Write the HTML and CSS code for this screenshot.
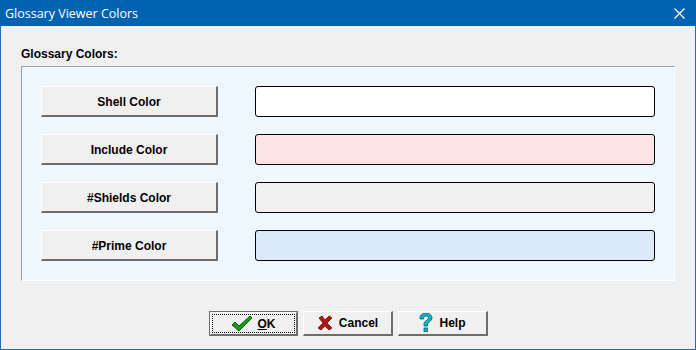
FILE: index.html
```html
<!DOCTYPE html>
<html lang="en">
<head>
    <meta charset="UTF-8">
    <title>Glossary Viewer Colors</title>
    <link rel="stylesheet" href="styles.css">
</head>
<body>
    <div class="window">
        <div class="titlebar">
            <span class="title">Glossary Viewer Colors</span>
            <svg class="close" width="11" height="11" viewBox="0 0 11 11">
                <path d="M0.5 0.5 L10.5 10.5 M10.5 0.5 L0.5 10.5" stroke="#fff" stroke-width="1.3"/>
            </svg>
        </div>
        <div class="content">
            <div class="group-label">Glossary Colors:</div>
            <div class="group">
                <div class="row">
                    <button class="btn color-btn">Shell Color</button>
                    <div class="swatch shell"></div>
                </div>
                <div class="row">
                    <button class="btn color-btn">Include Color</button>
                    <div class="swatch include"></div>
                </div>
                <div class="row">
                    <button class="btn color-btn">#Shields Color</button>
                    <div class="swatch shields"></div>
                </div>
                <div class="row">
                    <button class="btn color-btn">#Prime Color</button>
                    <div class="swatch prime"></div>
                </div>
            </div>
            <div class="actions">
                <button class="btn action default">
                    <span class="focus">
                        <svg width="22" height="18" viewBox="0 0 22 18">
                            <path d="M1 10 L4 7 L8 11 L19 1 L21 3 L8 16 Z" fill="#1a9a1a" stroke="#0b5d0b" stroke-width="1"/>
                        </svg>
                        <span><u>O</u>K</span>
                    </span>
                </button>
                <button class="btn action">
                    <svg width="16" height="16" viewBox="0 0 16 16">
                        <path d="M2 3 L5 1 L8 5 L12 1 L15 3 L10 8 L15 13 L12 15 L8 11 L4 15 L1 13 L6 8 Z" fill="#b01818" stroke="#6a0a0a" stroke-width="0.8"/>
                    </svg>
                    <span>Cancel</span>
                </button>
                <button class="btn action">
                    <svg width="14" height="20" viewBox="0 0 14 20">
                        <path d="M1 5 C1 1 5 0 7 0 C10 0 13 2 13 5 C13 8 9 9 8.5 11 L8.5 13 L5 13 L5 10.5 C5 8 9.5 7 9.5 5 C9.5 3.5 8.5 3 7 3 C5.5 3 4.5 4 4.5 6 L1 6 Z" fill="#10b4c8" stroke="#04606c" stroke-width="0.8"/>
                        <rect x="5" y="15" width="3.5" height="3.5" fill="#10b4c8" stroke="#04606c" stroke-width="0.8"/>
                    </svg>
                    <span>Help</span>
                </button>
            </div>
        </div>
    </div>
</body>
</html>
```

FILE: styles.css
```css
body {
    margin: 0;
    font-family: "Liberation Sans", Arial, sans-serif;
}
.window {
    width: 696px;
    height: 350px;
    box-sizing: border-box;
    border: 1px solid #1a6fb8;
    border-top: none;
    background-color: #f0f0f0;
    display: flex;
    flex-direction: column;
}
.titlebar {
    height: 26px;
    margin: 0 -1px;
    background-color: #0063b1;
    color: white;
    display: flex;
    align-items: center;
    justify-content: space-between;
    padding: 0 11px 0 5px;
}
.title {
    font-family: "Open Sans", "Noto Sans", sans-serif;
    font-size: 12.5px;
    padding-top: 1px;
}
.close {
    display: block;
}
.content {
    flex: 1;
    padding: 0 20px 0 20px;
    display: flex;
    flex-direction: column;
}
.group-label {
    font-weight: bold;
    font-size: 12px;
    margin-top: 21px;
    height: 19px;
    color: #000;
}
.group {
    background-color: #eef6fe;
    border-top: 1px solid #a0a0a0;
    border-left: 1px solid #a0a0a0;
    border-right: 1px solid #fff;
    border-bottom: 1px solid #fff;
    padding: 19px 18px 19px 19px;
    display: flex;
    flex-direction: column;
    gap: 17px;
}
.row {
    display: flex;
    align-items: center;
    gap: 37px;
    height: 31px;
}
.btn {
    font-family: "Liberation Sans", Arial, sans-serif;
    font-weight: bold;
    font-size: 12px;
    color: #000;
    background-color: #f0f0f0;
    border-top: 1px solid #fff;
    border-left: 1px solid #fff;
    border-right: 2px solid #6d6d6d;
    border-bottom: 2px solid #6d6d6d;
    box-sizing: border-box;
    padding: 0;
    margin: 0;
}
.color-btn {
    width: 177px;
    height: 31px;
    padding-top: 1px;
}
.swatch {
    width: 400px;
    height: 31px;
    box-sizing: border-box;
    border: 1px solid #000;
    border-radius: 3px;
}
.shell { background-color: #ffffff; }
.include { background-color: #fde2e6; }
.shields { background-color: #f0f0f0; }
.prime { background-color: #daeaf8; }
.actions {
    display: flex;
    justify-content: center;
    gap: 5px;
    margin-top: 30px;
    padding-left: 1px;
}
.action {
    width: 90px;
    height: 25px;
    display: flex;
    align-items: center;
    justify-content: center;
    gap: 6px;
}
.action.default {
    width: 89px;
    outline: 1px solid #6d6d6d;
    outline-offset: -1px;
    border-top: 2px solid #fff;
    border-left: 2px solid #fff;
    padding: 1px;
}
.focus {
    flex: 1;
    align-self: stretch;
    border: 1px dotted #000;
    display: flex;
    align-items: center;
    justify-content: center;
    gap: 4px;
}
.action svg {
    display: block;
}
```
